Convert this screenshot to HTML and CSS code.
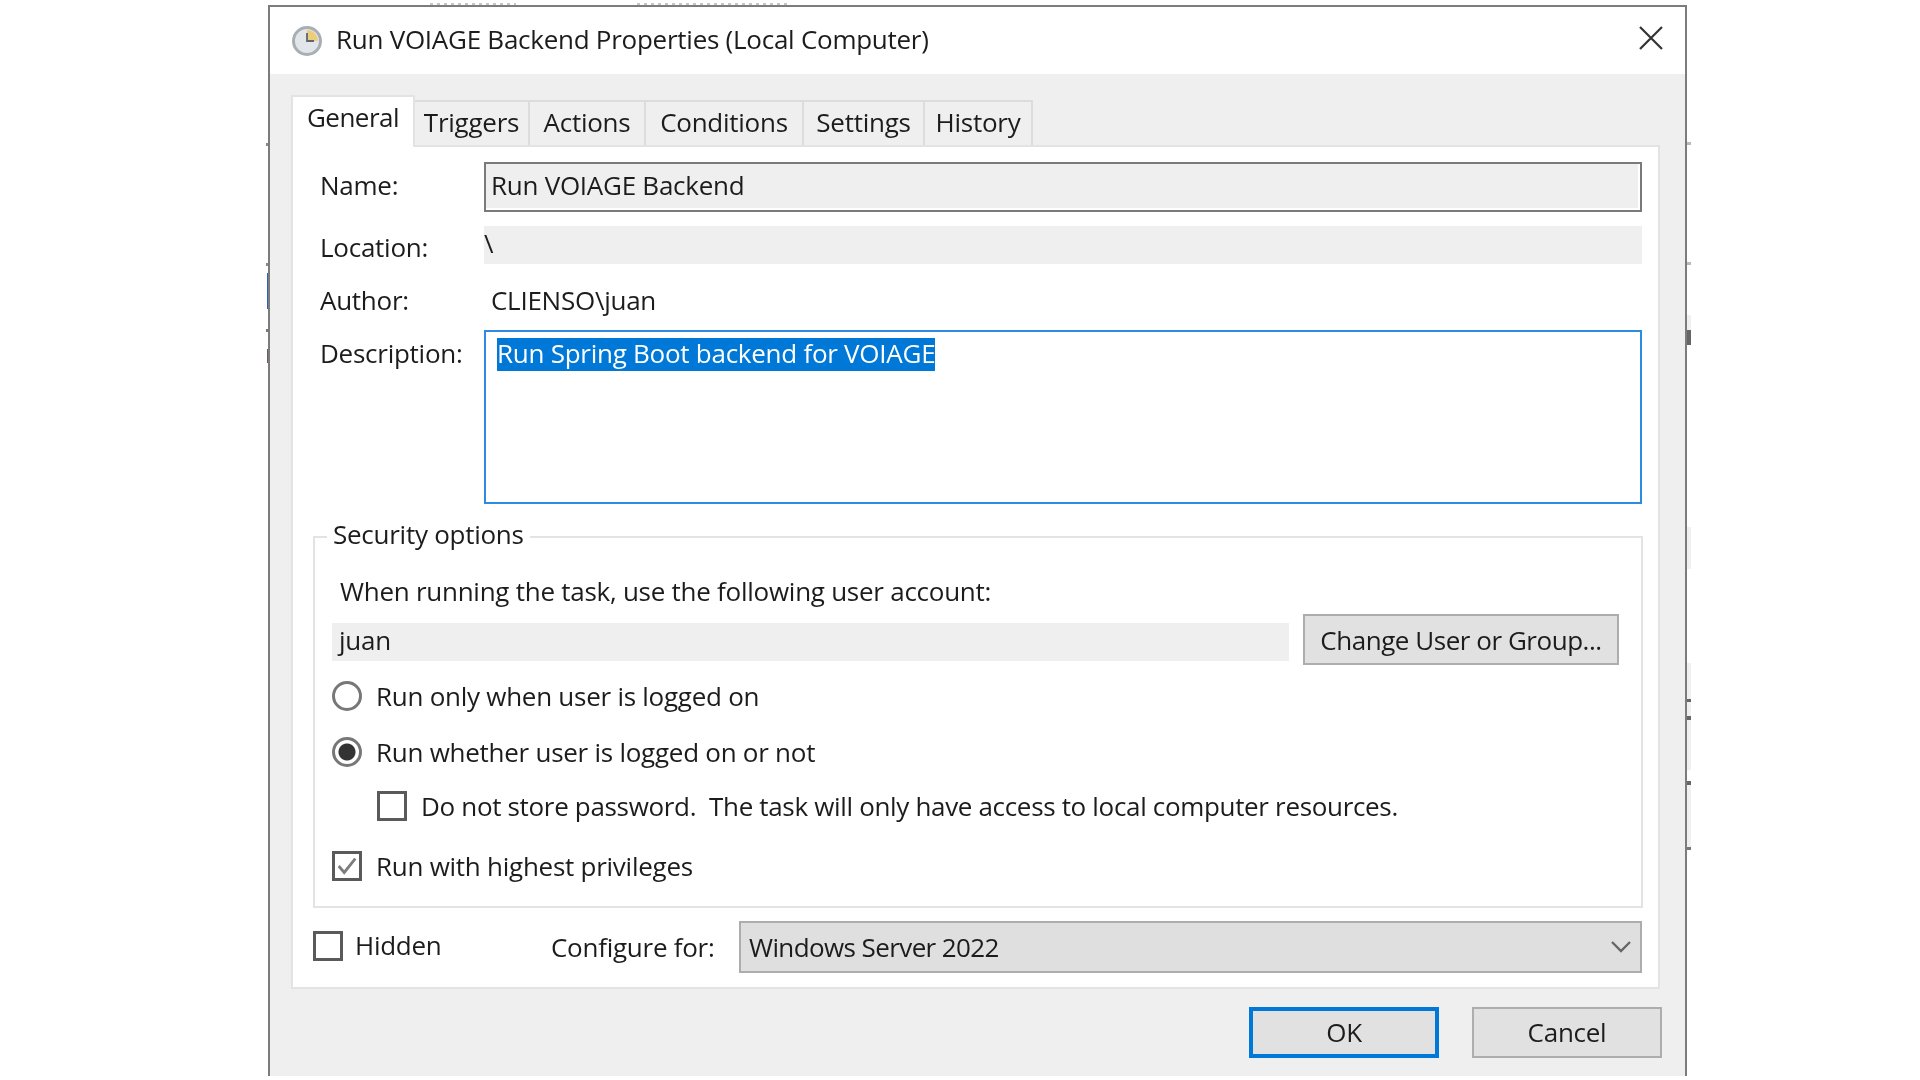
FILE: index.html
```html
<!DOCTYPE html>
<html lang="en">
<head>
    <meta charset="UTF-8">
    <title>Run VOIAGE Backend Properties (Local Computer)</title>
    <link rel="stylesheet" href="styles.css">
</head>
<body>
<!-- bits of the window behind the dialog that stick out past its edge -->
<svg class="behind" width="1920" height="1080" viewBox="0 0 1920 1080">
    <path d="M430 4H516M637 4H788" stroke="#8f8893" stroke-width="1.2" stroke-dasharray="3 4"/>
    <rect x="266" y="143" width="3" height="3" fill="#8a8a8a"/>
    <rect x="266" y="263" width="3" height="3" fill="#8a8a8a"/>
    <rect x="267" y="273" width="2" height="36" fill="#2f5fc0"/>
    <rect x="266" y="329" width="3" height="3" fill="#777"/>
    <rect x="267" y="349" width="2" height="14" fill="#6b5a6a"/>
    <rect x="1686" y="142" width="5" height="3" fill="#bbb"/>
    <rect x="1686" y="262" width="5" height="3" fill="#bbb"/>
    <rect x="1686" y="315" width="5" height="15" fill="#f0f0f0"/>
    <rect x="1686" y="330" width="5" height="15" fill="#666"/>
    <rect x="1686" y="527" width="5" height="42" fill="#f0f0f0"/>
    <rect x="1686" y="663" width="5" height="107" fill="#f0f0f0"/>
    <rect x="1686" y="699" width="5" height="3" fill="#666"/>
    <rect x="1686" y="716" width="5" height="4" fill="#666"/>
    <rect x="1686" y="781" width="5" height="4" fill="#666"/>
    <rect x="1686" y="785" width="5" height="62" fill="#f0f0f0"/>
    <rect x="1686" y="847" width="5" height="3" fill="#777"/>
</svg>
<div class="dialog">
    <div class="titlebar">
        <svg class="clock" width="30" height="30" viewBox="0 0 30 30">
            <circle cx="15" cy="15" r="13.5" fill="#e2e6ea" stroke="#a9aeb3" stroke-width="3"/>
            <path d="M15 4a11 11 0 0 1 11 11H15z" fill="#eccd7c"/>
            <path d="M15 7v8h7" fill="none" stroke="#5f666c" stroke-width="1.8"/>
        </svg>
        <span class="title">Run VOIAGE Backend Properties (Local Computer)</span>
        <svg class="close" width="24" height="24" viewBox="0 0 24 24">
            <path d="M1 1l22 22M23 1L1 23" stroke="#333" stroke-width="2.2" fill="none"/>
        </svg>
    </div>
    <div class="tabs">
        <div class="tab active" style="width:124px">General</div>
        <div class="tab" style="width:115px">Triggers</div>
        <div class="tab" style="width:116px">Actions</div>
        <div class="tab" style="width:158px">Conditions</div>
        <div class="tab" style="width:121px">Settings</div>
        <div class="tab" style="width:108px">History</div>
    </div>
    <div class="panel">
        <div class="row name-row">
            <label class="lbl">Name:</label>
            <div class="name-box">Run VOIAGE Backend</div>
        </div>
        <div class="row location-row">
            <label class="lbl">Location:</label>
            <div class="location-box">\</div>
        </div>
        <div class="row author-row">
            <label class="lbl">Author:</label>
            <div class="author-val">CLIENSO\juan</div>
        </div>
        <div class="row desc-row">
            <label class="lbl">Description:</label>
            <div class="desc-box"><span class="selected">Run Spring Boot backend for VOIAGE</span></div>
        </div>
        <div class="group">
            <span class="legend">Security options</span>
            <div class="when">When running the task, use the following user account:</div>
            <div class="user-row">
                <div class="user-box">juan</div>
                <div class="btn change-btn">Change User or Group...</div>
            </div>
            <div class="opt first-opt"><span class="radio"></span>Run only when user is logged on</div>
            <div class="opt second-opt"><span class="radio on"></span>Run whether user is logged on or not</div>
            <div class="opt third-opt"><span class="check"></span>Do not store password.&nbsp; The task will only have access to local computer resources.</div>
            <div class="opt fourth-opt">
                <span class="check">
                    <svg width="26" height="26" viewBox="0 0 26 26"><path d="M4 13l6 7L22 5" fill="none" stroke="#7d7d7d" stroke-width="3"/></svg>
                </span>Run with highest privileges
            </div>
        </div>
        <div class="bottom-row">
            <div class="hidden-opt"><span class="check"></span><span class="hidden-text">Hidden</span></div>
            <span class="config-lbl">Configure for:</span>
            <div class="select">
                <span class="select-text">Windows Server 2022</span>
                <svg width="20" height="12" viewBox="0 0 20 12"><path d="M1 1l9 9 9-9" fill="none" stroke="#666" stroke-width="2.4"/></svg>
            </div>
        </div>
    </div>
    <div class="buttons">
        <div class="btn ok-btn">OK</div>
        <div class="btn cancel-btn">Cancel</div>
    </div>
</div>
</body>
</html>
```

FILE: styles.css
```css
* {
    box-sizing: border-box;
}

html, body {
    margin: 0;
    padding: 0;
    height: 100%;
    background: #fff;
    overflow: hidden;
}

body {
    font-family: "Open Sans", sans-serif;
    font-size: 26px;
    letter-spacing: -0.26px;
    color: #1c1c1c;
}

.behind {
    position: absolute;
    top: 0;
    left: 0;
    filter: blur(0.7px);
}

.dialog {
    position: relative;
    width: 1419px;
    height: 1071px;
    margin: 5px 0 0 268px;
    border: solid #7c7c7c;
    border-width: 2px 2px 0 2px;
    background: #efefef;
    filter: blur(0.7px);
}

.titlebar {
    height: 67px;
    background: #fff;
    display: flex;
    align-items: center;
    padding: 0 22px 0 22px;
}

.clock {
    margin-right: 14px;
}

.title {
    flex: 1;
    margin-top: -4px;
}

.close {
    margin-top: -5px;
}

.tabs {
    display: flex;
    margin: 21px 0 0 21px;
    height: 50px;
    align-items: flex-end;
    position: relative;
    z-index: 1;
}

.tab {
    height: 45px;
    border: 2px solid #dcdcdc;
    border-left: 0;
    border-bottom: 0;
    text-align: center;
    line-height: 40px;
    background: #efefef;
}

.tab.active {
    height: 52px;
    margin-bottom: -2px;
    background: #fff;
    border: 2px solid #e3e3e3;
    border-bottom: 0;
    line-height: 40px;
    letter-spacing: -0.5px;
}

.panel {
    width: 1369px;
    height: 844px;
    margin-left: 21px;
    background: #fff;
    border: 2px solid #e3e3e3;
    padding: 15px 16px 0 27px;
}

.row {
    display: flex;
}

.lbl {
    width: 164px;
    flex-shrink: 0;
}

.name-row {
    height: 50px;
    align-items: center;
}

.name-row .lbl {
    margin-top: -4px;
}

.name-box {
    flex: 1;
    height: 50px;
    line-height: 42px;
    padding-left: 5px;
    background: #efefef;
    border: 2px solid #7a7a7a;
    box-shadow: inset -2px -2px 0 #fff;
}

.location-row {
    height: 38px;
    margin-top: 14px;
    align-items: center;
}

.location-row .lbl {
    margin-top: 4px;
}

.location-box {
    flex: 1;
    height: 38px;
    line-height: 34px;
    background: #efefef;
}

.author-row {
    height: 40px;
    margin-top: 16px;
    align-items: center;
}

.author-val {
    padding-left: 7px;
}

.desc-row {
    margin-top: 10px;
}

.desc-row .lbl {
    line-height: 46px;
}

.desc-box {
    flex: 1;
    height: 174px;
    border: 2px solid #2b8ce0;
    background: #fff;
    padding: 3px 0 0 11px;
}

.selected {
    display: inline-block;
    height: 33px;
    line-height: 31px;
    background: #0078d7;
    color: #fff;
}

.group {
    position: relative;
    width: 1330px;
    height: 372px;
    margin: 32px 0 0 -7px;
    border: 2px solid #e3e3e3;
    padding: 0 22px 0 17px;
}

.legend {
    position: absolute;
    left: 12px;
    top: -22px;
    padding: 0 6px;
    line-height: 36px;
    background: #fff;
}

.when {
    padding: 36px 0 0 8px;
    line-height: 34px;
}

.user-row {
    display: flex;
    align-items: center;
    justify-content: space-between;
    margin-top: 6px;
}

.user-box {
    width: 957px;
    height: 38px;
    margin-top: 4px;
    line-height: 34px;
    padding-left: 7px;
    background: #efefef;
}

.btn {
    display: flex;
    align-items: center;
    justify-content: center;
    padding-bottom: 2px;
    background: #e1e1e1;
    border: 2px solid #adadad;
}

.change-btn {
    width: 316px;
    height: 51px;
    padding-bottom: 0;
    letter-spacing: -0.46px;
}

.opt {
    display: flex;
    align-items: center;
    height: 30px;
}

.first-opt {
    margin-top: 16px;
}

.second-opt {
    margin-top: 26px;
}

.third-opt {
    margin: 24px 0 0 45px;
    letter-spacing: -0.33px;
}

.fourth-opt {
    margin-top: 30px;
}

.radio {
    width: 30px;
    height: 30px;
    border-radius: 50%;
    border: 3px solid #777;
    margin-right: 14px;
    background: #fff;
    flex-shrink: 0;
}

.radio.on {
    background: radial-gradient(circle, #333 0 8px, #fff 9px);
}

.check {
    width: 30px;
    height: 30px;
    border: 3px solid #5a5a5a;
    margin-right: 14px;
    background: #fff;
    flex-shrink: 0;
}

.check svg {
    display: block;
    width: 24px;
    height: 24px;
}

.bottom-row {
    display: flex;
    align-items: center;
    height: 52px;
    margin: 13px 0 0 -7px;
}

.hidden-opt {
    display: flex;
    align-items: center;
    width: 238px;
    margin-top: -2px;
}

.hidden-opt .check {
    margin-right: 12px;
}

.hidden-text {
    margin-top: -2px;
}

.config-lbl {
    width: 188px;
}

.select {
    flex: 1;
    height: 52px;
    display: flex;
    align-items: center;
    justify-content: space-between;
    padding: 0 9px 0 8px;
    background: #dfdfdf;
    border: 2px solid #adadad;
}

.select-text {
    letter-spacing: -0.6px;
}

.buttons {
    display: flex;
    justify-content: flex-end;
    gap: 33px;
    margin: 18px 23px 0 0;
}

.ok-btn, .cancel-btn {
    width: 190px;
    height: 51px;
}

.ok-btn {
    border: 4px solid #0078d7;
}
```
